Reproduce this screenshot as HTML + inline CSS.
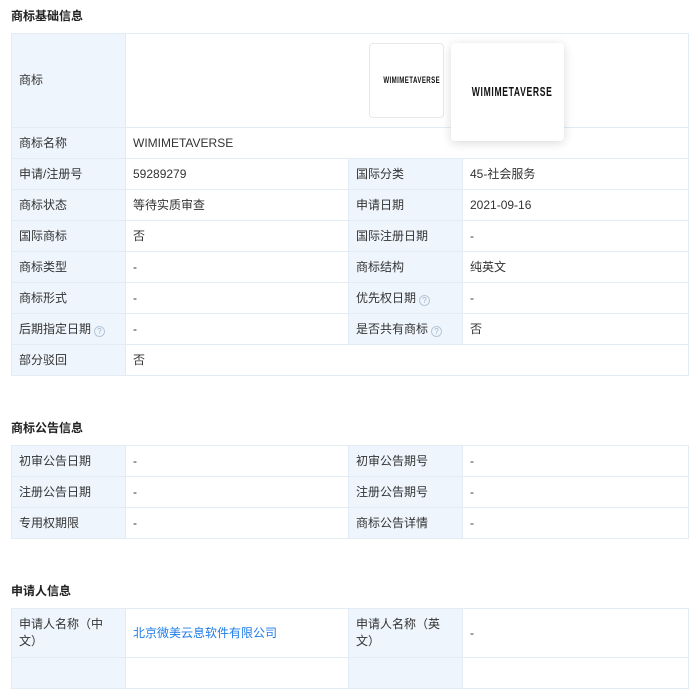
<!DOCTYPE html>
<html><head><meta charset="utf-8"><style>
*{margin:0;padding:0;box-sizing:border-box}
body{width:693px;height:666px;overflow:hidden;background:#fff;font-family:"Liberation Sans","Noto Sans CJK SC",sans-serif;font-size:12px;color:#333;position:relative}
.t{position:absolute;left:11px;font-weight:bold;font-size:12px;color:#222}
table{position:absolute;left:11px;width:678px;border-collapse:collapse;table-layout:fixed}
td{border:1px solid #e3ecf5;height:31px;padding:0 7px;vertical-align:middle;line-height:17px}
td.l{background:#eef5fc}
.q{display:inline-block;width:11px;height:11px;border:1px solid #b5c7da;border-radius:50%;color:#9fb3c8;font-size:8px;line-height:9px;text-align:center;vertical-align:-1px;margin-left:3px}
a{color:#1e7ce8;text-decoration:none}
.b1{position:absolute;left:369px;top:43px;width:75px;height:75px;border:1px solid #e8e8e8;border-radius:4px;background:#fff;text-align:center;line-height:71px;color:#111}
.b1 span{display:inline-block;font-size:9px;font-weight:bold;letter-spacing:0.6px;transform:scaleX(0.68);white-space:nowrap}
.b2{position:absolute;left:451px;top:43px;width:113px;height:98px;border-radius:4px;background:#fff;box-shadow:0 2px 10px rgba(0,0,0,.15);text-align:center;line-height:98px;color:#111}
.b2 span{display:inline-block;font-size:13px;font-weight:bold;letter-spacing:1px;transform:scaleX(0.66);white-space:nowrap}
</style></head><body>
<div class="t" style="top:7px">商标基础信息</div>
<table style="top:33px">
<colgroup><col style="width:114px"><col style="width:223px"><col style="width:114px"><col></colgroup>
<tr><td class="l" style="height:94px">商标</td><td colspan="3"></td></tr>
<tr><td class="l">商标名称</td><td colspan="3">WIMIMETAVERSE</td></tr>
<tr><td class="l">申请/注册号</td><td>59289279</td><td class="l">国际分类</td><td>45-社会服务</td></tr>
<tr><td class="l">商标状态</td><td>等待实质审查</td><td class="l">申请日期</td><td>2021-09-16</td></tr>
<tr><td class="l">国际商标</td><td>否</td><td class="l">国际注册日期</td><td>-</td></tr>
<tr><td class="l">商标类型</td><td>-</td><td class="l">商标结构</td><td>纯英文</td></tr>
<tr><td class="l">商标形式</td><td>-</td><td class="l">优先权日期<span class="q">?</span></td><td>-</td></tr>
<tr><td class="l">后期指定日期<span class="q">?</span></td><td>-</td><td class="l">是否共有商标<span class="q">?</span></td><td>否</td></tr>
<tr><td class="l">部分驳回</td><td colspan="3">否</td></tr>
</table>
<div class="b1"><span>WIMIMETAVERSE</span></div>
<div class="b2"><span>WIMIMETAVERSE</span></div>
<div class="t" style="top:419px">商标公告信息</div>
<table style="top:445px">
<colgroup><col style="width:114px"><col style="width:223px"><col style="width:114px"><col></colgroup>
<tr><td class="l">初审公告日期</td><td>-</td><td class="l">初审公告期号</td><td>-</td></tr>
<tr><td class="l">注册公告日期</td><td>-</td><td class="l">注册公告期号</td><td>-</td></tr>
<tr><td class="l">专用权期限</td><td>-</td><td class="l">商标公告详情</td><td>-</td></tr>
</table>
<div class="t" style="top:582px">申请人信息</div>
<table style="top:608px">
<colgroup><col style="width:114px"><col style="width:223px"><col style="width:114px"><col></colgroup>
<tr><td class="l" style="height:49px">申请人名称（中文）</td><td><a>北京微美云息软件有限公司</a></td><td class="l">申请人名称（英文）</td><td>-</td></tr>
<tr><td class="l"></td><td></td><td class="l"></td><td></td></tr>
</table>
</body></html>
